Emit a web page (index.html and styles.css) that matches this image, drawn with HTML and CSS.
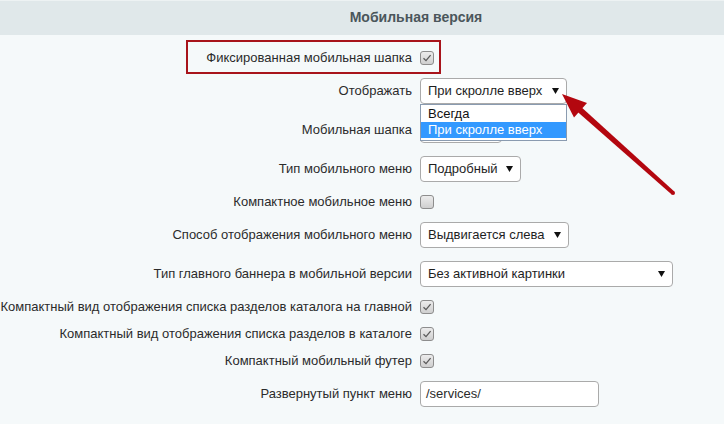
FILE: index.html
```html
<!DOCTYPE html>
<html lang="ru">
<head>
<meta charset="utf-8">
<title>Мобильная версия</title>
<link rel="stylesheet" href="styles.css">
</head>
<body>
<div class="page">
  <div class="head">Мобильная версия</div>
  <div class="form">
    <div class="row cbrow">
      <div class="lbl">Фиксированная мобильная шапка</div>
      <div class="ctl"><span class="cb"><svg viewBox="0 0 14 14" width="14" height="14"><polyline points="3.5,7.2 6,9.6 10.6,4.2" fill="none" stroke="#5a5a5a" stroke-width="1.3"/></svg></span></div>
      <span class="mark"></span>
    </div>
    <div class="row selrow">
      <div class="lbl">Отображать</div>
      <div class="ctl">
        <div class="select w147"><span>При скролле вверх</span><svg class="tri" viewBox="0 0 7 6" width="7" height="6"><polygon points="0,0 7,0 3.5,6" fill="#111"/></svg></div>
        <div class="list">
          <div class="opt">Всегда</div>
          <div class="opt on">При скролле вверх</div>
        </div>
      </div>
    </div>
    <div class="row selrow">
      <div class="lbl">Мобильная шапка</div>
      <div class="ctl"><div class="select w82"><span></span></div></div>
    </div>
    <div class="row selrow">
      <div class="lbl">Тип мобильного меню</div>
      <div class="ctl"><div class="select w101"><span>Подробный</span><svg class="tri" viewBox="0 0 7 6" width="7" height="6"><polygon points="0,0 7,0 3.5,6" fill="#111"/></svg></div></div>
    </div>
    <div class="row cbrow">
      <div class="lbl">Компактное мобильное меню</div>
      <div class="ctl"><span class="cb"></span></div>
    </div>
    <div class="row selrow">
      <div class="lbl">Способ отображения мобильного меню</div>
      <div class="ctl"><div class="select w149"><span>Выдвигается слева</span><svg class="tri" viewBox="0 0 7 6" width="7" height="6"><polygon points="0,0 7,0 3.5,6" fill="#111"/></svg></div></div>
    </div>
    <div class="row selrow">
      <div class="lbl">Тип главного баннера в мобильной версии</div>
      <div class="ctl"><div class="select w253"><span>Без активной картинки</span><svg class="tri" viewBox="0 0 7 6" width="7" height="6"><polygon points="0,0 7,0 3.5,6" fill="#111"/></svg></div></div>
    </div>
    <div class="row cbrow">
      <div class="lbl">Компактный вид отображения списка разделов каталога на главной</div>
      <div class="ctl"><span class="cb"><svg viewBox="0 0 14 14" width="14" height="14"><polyline points="3.5,7.2 6,9.6 10.6,4.2" fill="none" stroke="#5a5a5a" stroke-width="1.3"/></svg></span></div>
    </div>
    <div class="row cbrow">
      <div class="lbl">Компактный вид отображения списка разделов в каталоге</div>
      <div class="ctl"><span class="cb"><svg viewBox="0 0 14 14" width="14" height="14"><polyline points="3.5,7.2 6,9.6 10.6,4.2" fill="none" stroke="#5a5a5a" stroke-width="1.3"/></svg></span></div>
    </div>
    <div class="row cbrow">
      <div class="lbl">Компактный мобильный футер</div>
      <div class="ctl"><span class="cb"><svg viewBox="0 0 14 14" width="14" height="14"><polyline points="3.5,7.2 6,9.6 10.6,4.2" fill="none" stroke="#5a5a5a" stroke-width="1.3"/></svg></span></div>
    </div>
    <div class="row selrow">
      <div class="lbl">Развернутый пункт меню</div>
      <div class="ctl"><div class="input">/services/</div></div>
    </div>
  </div>
  <svg class="arrow" viewBox="0 0 724 424" width="724" height="424">
    <polygon points="582,107.8 674.3,191.5 671.7,194.5 578,112.2" fill="#b3070f"/>
    <circle cx="673" cy="193" r="2" fill="#b3070f"/>
    <polygon points="562,94 587,103 574,117.5" fill="#b3070f"/>
  </svg>
</div>
</body>
</html>
```
FILE: styles.css
```css
html, body {
  margin: 0;
  padding: 0;
}
body {
  background: #f5f9fa;
  font-family: "Liberation Sans", Arial, sans-serif;
  font-size: 13px;
  color: #2b2b2b;
}
.page {
  position: relative;
  width: 724px;
  height: 424px;
  overflow: hidden;
}
.head {
  height: 35px;
  box-sizing: border-box;
  border-top: 1px solid #edf2f3;
  background: #e0e8ea;
  color: #4b565b;
  font-weight: bold;
  font-size: 14px;
  line-height: 33px;
  text-align: center;
  padding-left: 108px;
}
.form {
  padding-top: 9px;
}
.row {
  position: relative;
  display: grid;
  grid-template-columns: 412px 1fr;
  column-gap: 8px;
  align-items: center;
}
.cbrow { height: 27px; }
.selrow { height: 39px; }
.lbl {
  text-align: right;
  white-space: nowrap;
  color: #2b2b2b;
}
.ctl {
  position: relative;
  display: flex;
  align-items: center;
}
.cb {
  display: block;
  width: 14px;
  height: 14px;
  box-sizing: border-box;
  border: 1px solid #8d8d8d;
  border-radius: 3px;
  background: linear-gradient(#ececec, #cfcfcf);
  position: relative;
}
.cb svg {
  position: absolute;
  left: -1px;
  top: -1px;
}
.mark {
  position: absolute;
  left: 186px;
  top: -4px;
  width: 255px;
  height: 34px;
  box-sizing: border-box;
  border: 2px solid #a8141b;
}
.select {
  height: 26px;
  box-sizing: border-box;
  border: 1px solid #aaaaaa;
  border-radius: 4px;
  background: #fff;
  display: flex;
  align-items: center;
  justify-content: space-between;
  padding: 0 7px 0 7px;
  color: #1e1e1e;
  white-space: nowrap;
}
.tri { flex: none; margin-top: 1px; }
.w82 { width: 82px; }
.w101 { width: 101px; }
.w147 { width: 147px; }
.w149 { width: 149px; }
.w253 { width: 253px; }
.list {
  position: absolute;
  left: 0;
  top: 26px;
  width: 147px;
  box-sizing: border-box;
  border: 1px solid #8a9bb0;
  background: #fff;
  padding-bottom: 2px;
  z-index: 2;
}
.opt {
  height: 16px;
  line-height: 16px;
  padding-left: 7px;
  color: #111;
  white-space: nowrap;
}
.opt:first-child { height: 17px; line-height: 17px; }
.opt.on {
  background: #3399ff;
  color: #fff;
}
.input {
  width: 179px;
  height: 26px;
  box-sizing: border-box;
  border: 1px solid #aaaaaa;
  border-radius: 4px;
  background: #fff;
  padding-left: 5px;
  line-height: 24px;
  color: #2b2b2b;
}
.arrow {
  position: absolute;
  left: 0;
  top: 0;
  pointer-events: none;
  z-index: 5;
}
```
